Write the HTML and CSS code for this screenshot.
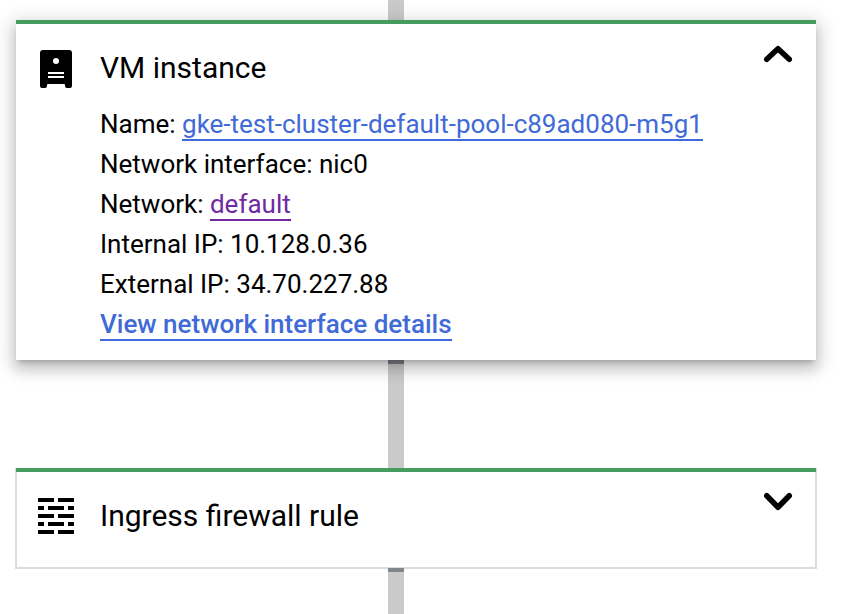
FILE: index.html
```html
<!DOCTYPE html>
<html lang="en">
<head>
    <meta charset="UTF-8">
    <title>Connectivity test trace</title>
    <link rel="stylesheet" href="styles.css">
</head>
<body>
    <div class="trace">
        <div class="connector connector-top"></div>

        <div class="card card-open">
            <div class="card-header">
                <svg class="card-icon" viewBox="0 0 36 40">
                    <path fill-rule="evenodd" d="M5 2h26a3 3 0 0 1 3 3v33a2 2 0 0 1-2 2h-3a2 2 0 0 1-2-2v-1a1 1 0 0 0-1-1H10a1 1 0 0 0-1 1v1a2 2 0 0 1-2 2H4a2 2 0 0 1-2-2V5a3 3 0 0 1 3-3zM18 10a3 3 0 1 0 0 6a3 3 0 0 0 0-6zM10 24v2h16v-2zM10 28v2h16v-2z"/>
                </svg>
                <span class="card-title">VM instance</span>
                <svg class="chevron" viewBox="0 0 36 24">
                    <path d="M6.75 19.25L18 8.75L29.25 19.25"/>
                </svg>
            </div>
            <div class="card-body">
                <div class="row">Name: <a class="link" href="#">gke-test-cluster-default-pool-c89ad080-m5g1</a></div>
                <div class="row">Network interface: nic0</div>
                <div class="row">Network: <a class="link link-visited" href="#">default</a></div>
                <div class="row">Internal IP: 10.128.0.36</div>
                <div class="row">External IP: 34.70.227.88</div>
                <div class="row"><a class="link link-strong" href="#">View network interface details</a></div>
            </div>
        </div>

        <div class="connector connector-middle"></div>

        <div class="card card-closed">
            <div class="card-header">
                <svg class="card-icon" viewBox="0 0 36 40" shape-rendering="crispEdges">
                    <path d="M0 2h16v4H0zM20 2h16v4H20zM0 10h6v4H0zM10 10h16v4H10zM30 10h6v4h-6zM0 18h16v4H0zM20 18h16v4H20zM0 26h6v4H0zM10 26h16v4H10zM30 26h6v4h-6zM0 34h16v4H0zM20 34h16v4H20z"/>
                </svg>
                <span class="card-title">Ingress firewall rule</span>
                <svg class="chevron" viewBox="0 0 36 24">
                    <path d="M6.75 7.75L18 19.25L29.25 7.75"/>
                </svg>
            </div>
        </div>

        <div class="connector connector-bottom"></div>
    </div>
</body>
</html>
```

FILE: styles.css
```css
html, body {
    margin: 0;
    padding: 0;
    height: 100%;
    overflow: hidden;
    background-color: #fff;
}

body {
    font-family: Roboto, 'Liberation Sans', sans-serif;
    color: #000;
}

.trace {
    width: 800px;
    margin-left: 16px;
}

.connector {
    width: 16px;
    margin-left: 372px;
    background-color: #cacaca;
    box-sizing: border-box;
}

.connector-top {
    height: 20px;
}

.connector-middle {
    height: 108px;
    border-top: 4px solid #80868b;
}

.connector-bottom {
    height: 46px;
    margin-top: 1px;
    border-top: 4px solid #80868b;
}

.card {
    background-color: #fff;
    border-top: 4px solid #469c5f;
}

.card-open {
    position: relative;
    z-index: 1;
    padding-bottom: 16px;
    box-shadow: 0 8px 12px 2px rgba(0, 0, 0, 0.15), 0 4px 20px 4px rgba(0, 0, 0, 0.12), 0 5px 5px -3px rgba(0, 0, 0, 0.2);
}

.card-closed {
    padding-bottom: 15px;
    box-shadow: 0 1px 0 1px #dadce0, inset 1px 0 0 #dadce0, inset -1px 0 0 #dadce0;
}

.card-header {
    display: flex;
    padding: 24px 20px 16px 22px;
}

.card-icon {
    width: 36px;
    height: 40px;
    flex: none;
    margin-right: 26px;
}

.card-title {
    flex: 1;
    font-size: 30px;
    line-height: 40px;
}

.chevron {
    width: 36px;
    height: 24px;
    flex: none;
    margin-top: -8px;
    fill: none;
    stroke: #000;
    stroke-width: 5.5;
    stroke-linecap: round;
    stroke-linejoin: round;
}

.card-body {
    padding-left: 84px;
    font-size: 26px;
    line-height: 40px;
}

.link {
    color: #3f6ad8;
    text-decoration: none;
    border-bottom: 2px solid #3f6ad8;
}

.link-visited {
    color: #7029a1;
    border-bottom-color: #7029a1;
}

.link-strong {
    font-weight: 500;
}
```
